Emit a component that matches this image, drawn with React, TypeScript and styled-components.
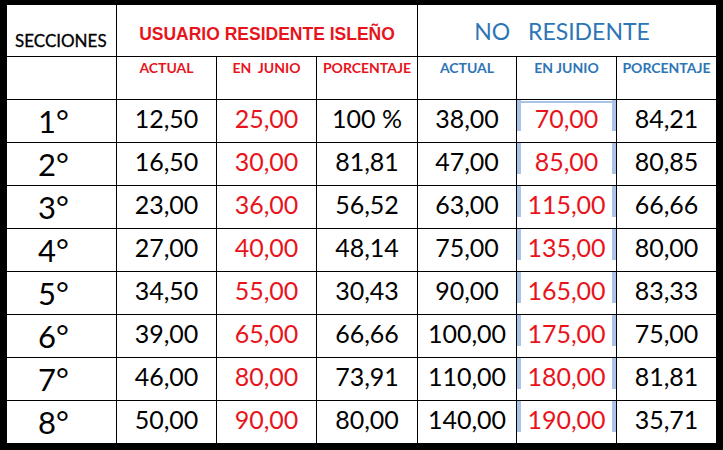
import React from "react";
import styled, { createGlobalStyle, css } from "styled-components";

const GlobalStyle = createGlobalStyle`
  html, body {
    margin: 0;
    padding: 0;
    background: #000;
  }
  body {
    width: 723px;
    height: 450px;
    overflow: hidden;
  }
`;

const RED = "#e8141c";
const BLUE = "#2e75b6";
const SELECT = "#a9c4e6";

const Page = styled.div`
  width: 723px;
  height: 450px;
  box-sizing: border-box;
  padding: 5px 7px 7px 7px;
  background: #000;
`;

const Table = styled.div`
  display: grid;
  grid-template-columns: 109px 99px 99px 100px 98px 99px 99px;
  grid-template-rows: 51px 42px repeat(8, 42px);
  gap: 1px;
  background: #000;
  font-family: Lato, "Open Sans", sans-serif;
`;

const Cell = styled.div`
  background: #fff;
  display: flex;
  align-items: center;
  justify-content: center;
  white-space: pre;
  overflow: hidden;
`;

const SectionsHeader = styled(Cell)`
  align-items: flex-end;
  justify-content: flex-start;
  padding: 0 0 5px 8px;
  font-size: 17px;
  font-weight: 400;
  color: #000;
  -webkit-text-stroke: 0.3px #000;
`;

const GroupHeader = styled(Cell)<{ $tone: "red" | "blue" }>`
  grid-column: span 3;
  ${(p) =>
    p.$tone === "red"
      ? css`
          font-family: "Liberation Sans", Arial, sans-serif;
          font-weight: 700;
          font-size: 17.5px;
          color: ${RED};
          padding-top: 7px;
        `
      : css`
          font-family: Lato, "Open Sans", sans-serif;
          font-weight: 400;
          font-size: 23px;
          color: ${BLUE};
          word-spacing: 12px;
          padding: 0 10px 0 0;
        `}
`;

const SubHeader = styled(Cell)<{ $tone: "red" | "blue" }>`
  align-items: flex-start;
  padding-top: 2px;
  font-size: 14px;
  font-weight: 700;
  color: ${(p) => (p.$tone === "red" ? RED : BLUE)};
`;

const EmptyCell = styled(Cell)``;

const RowLabel = styled(Cell)`
  justify-content: flex-start;
  padding-left: 31px;
  font-size: 31px;
  color: #000;
`;

const NumberCell = styled(Cell)<{ $red?: boolean; $selected?: boolean; $first?: boolean }>`
  padding-bottom: 6px;
  box-sizing: border-box;
  font-size: 25px;
  color: ${(p) => (p.$red ? RED : "#000")};
  ${(p) =>
    p.$selected &&
    css`
      background:
        linear-gradient(${SELECT}, ${SELECT}) left 0 top 0 / 4px 31px no-repeat,
        linear-gradient(${SELECT}, ${SELECT}) right 0 top 0 / 4px 31px no-repeat,
        ${p.$first ? css`linear-gradient(${SELECT}, ${SELECT}) left 0 top 1px / 100% 2px no-repeat,` : ""}
        #fff;
    `}
`;

const rows: string[][] = [
  ["1°", "12,50", "25,00", "100 %", "38,00", "70,00", "84,21"],
  ["2°", "16,50", "30,00", "81,81", "47,00", "85,00", "80,85"],
  ["3°", "23,00", "36,00", "56,52", "63,00", "115,00", "66,66"],
  ["4°", "27,00", "40,00", "48,14", "75,00", "135,00", "80,00"],
  ["5°", "34,50", "55,00", "30,43", "90,00", "165,00", "83,33"],
  ["6°", "39,00", "65,00", "66,66", "100,00", "175,00", "75,00"],
  ["7°", "46,00", "80,00", "73,91", "110,00", "180,00", "81,81"],
  ["8°", "50,00", "90,00", "80,00", "140,00", "190,00", "35,71"],
];

export default function App() {
  return (
    <>
      <GlobalStyle />
      <Page>
        <Table>
          <SectionsHeader>SECCIONES</SectionsHeader>
          <GroupHeader $tone="red">USUARIO RESIDENTE ISLEÑO</GroupHeader>
          <GroupHeader $tone="blue">NO RESIDENTE</GroupHeader>

          <EmptyCell />
          <SubHeader $tone="red">ACTUAL</SubHeader>
          <SubHeader $tone="red">EN  JUNIO</SubHeader>
          <SubHeader $tone="red">PORCENTAJE</SubHeader>
          <SubHeader $tone="blue">ACTUAL</SubHeader>
          <SubHeader $tone="blue">EN JUNIO</SubHeader>
          <SubHeader $tone="blue">PORCENTAJE</SubHeader>

          {rows.map((r, i) => (
            <React.Fragment key={r[0]}>
              <RowLabel>{r[0]}</RowLabel>
              <NumberCell>{r[1]}</NumberCell>
              <NumberCell $red>{r[2]}</NumberCell>
              <NumberCell>{r[3]}</NumberCell>
              <NumberCell>{r[4]}</NumberCell>
              <NumberCell $red $selected $first={i === 0}>
                {r[5]}
              </NumberCell>
              <NumberCell>{r[6]}</NumberCell>
            </React.Fragment>
          ))}
        </Table>
      </Page>
    </>
  );
}
